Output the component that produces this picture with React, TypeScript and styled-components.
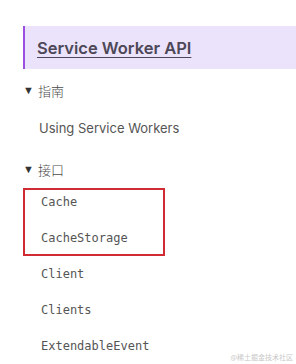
import React from "react";
import styled, { createGlobalStyle } from "styled-components";

const Global = createGlobalStyle`
  html, body { margin: 0; padding: 0; background: #fff; }
  body { font-family: Inter, "Noto Sans", "Noto Sans CJK SC", sans-serif; }
`;

const Page = styled.div`
  width: 296px;
  height: 364px;
  overflow: hidden;
  position: relative;
  padding: 26px 0 0 23px;
  box-sizing: border-box;
`;

const Header = styled.div`
  height: 43px;
  background: #ebe3fb;
  border-left: 2px solid #9b4fe0;
  display: flex;
  align-items: center;
  padding-left: 12px;
`;

const HeaderLink = styled.a`
  font-size: 16.5px;
  font-weight: 600;
  color: #4d4757;
  text-decoration: underline;
  text-underline-offset: 3px;
  text-decoration-thickness: 1px;
`;

const Section = styled.div<{ $top: number }>`
  display: flex;
  align-items: center;
  height: 20px;
  font-size: 13px;
  color: #4a4a4a;
  font-family: "Noto Sans CJK SC", sans-serif;
  font-weight: 300;
  margin-top: ${(p) => p.$top}px;
`;

const Caret = styled.span`
  font-size: 11px;
  margin-right: 4px;
  color: #333;
  font-family: "DejaVu Sans", sans-serif;
`;

const Item = styled.div<{ $mono?: boolean; $h?: number }>`
  height: ${(p) => p.$h ?? 36}px;
  display: flex;
  align-items: center;
  padding-left: ${(p) => (p.$mono ? 18 : 16)}px;
  font-size: ${(p) => (p.$mono ? 12 : 13)}px;
  color: #555;
  font-family: ${(p) =>
    p.$mono ? '"DejaVu Sans Mono", "Liberation Mono", monospace' : 'Inter, "Noto Sans", sans-serif'};
`;

const Highlight = styled.div`
  width: 142px;
  border: 2px solid #d02a33;
  box-sizing: border-box;
  margin-top: 9px;
  padding-bottom: 4px;
  display: flex;
  flex-direction: column;
  gap: 12px;
  & > div { margin-left: -2px; }
`;

const List = styled.div<{ $top: number }>`
  margin-top: ${(p) => p.$top}px;
`;

const Watermark = styled.div`
  position: absolute;
  right: 3px;
  bottom: 2px;
  font-size: 7px;
  color: #c8c8c8;
  font-family: "Noto Sans CJK SC", sans-serif;
`;

export default function App() {
  return (
    <>
      <Global />
      <Page>
        <Header>
          <HeaderLink>Service Worker API</HeaderLink>
        </Header>
        <Section $top={11}>
          <Caret>▼</Caret>指南
        </Section>
        <List $top={10}>
          <Item>Using Service Workers</Item>
        </List>
        <Section $top={13}>
          <Caret>▼</Caret>接口
        </Section>
        <Highlight>
          <Item $mono $h={24}>Cache</Item>
          <Item $mono $h={24}>CacheStorage</Item>
        </Highlight>
        <List $top={0}>
          <Item $mono>Client</Item>
          <Item $mono>Clients</Item>
          <Item $mono>ExtendableEvent</Item>
        </List>
        <Watermark>@稀土掘金技术社区</Watermark>
      </Page>
    </>
  );
}
